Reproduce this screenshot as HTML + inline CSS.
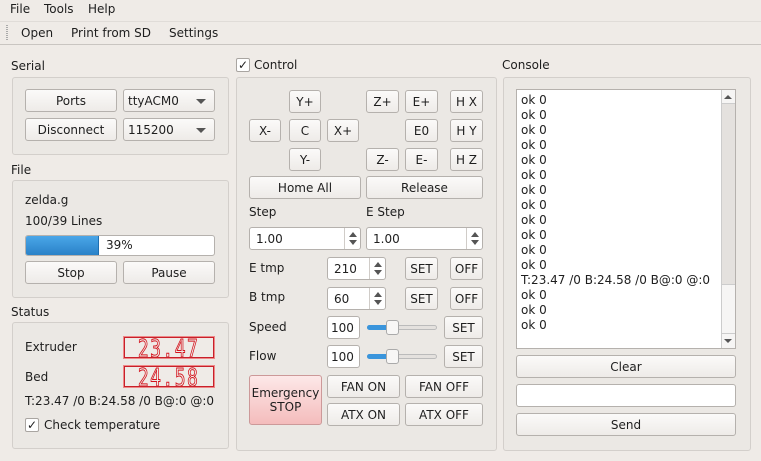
<!DOCTYPE html>
<html><head><meta charset="utf-8"><style>
*{box-sizing:border-box;margin:0;padding:0}
body{width:761px;height:461px;background:#efebe7;font-family:"DejaVu Sans","Liberation Sans",sans-serif;font-size:12px;color:#1e1e1e;position:relative;overflow:hidden}
.a{position:absolute;white-space:nowrap}
.t{position:absolute;white-space:nowrap;line-height:14px}
.b{position:absolute;border:1px solid #b5b1ad;border-radius:3px;background:linear-gradient(#fbfaf9,#eeebe8);text-align:center;display:flex;align-items:center;justify-content:center}
.g{position:absolute;border:1px solid #d3cfcb;border-radius:3px;background:#ebe8e4}
.e{position:absolute;border:1px solid #b5b1ad;border-radius:3px;background:#fff;display:flex;align-items:center;padding-left:8px}
.sp{position:absolute;right:0;top:0;bottom:0;width:16px;border-left:1px solid #d0ccc8}
.sp:before{content:"";position:absolute;left:4px;top:4px;border:4px solid transparent;border-bottom:5px solid #555;border-top:0}
.sp:after{content:"";position:absolute;left:4px;bottom:4px;border:4px solid transparent;border-top:5px solid #555;border-bottom:0}
.dd:after{content:"";position:absolute;right:8px;top:9px;border:5px solid transparent;border-top:5px solid #555;border-bottom:0}
.lcd{position:absolute;border:1px solid #c8202a;outline:1px solid #e88;background:#efebe7;overflow:hidden}
.lcd span{position:absolute;right:14px;top:-2px;font-family:"DejaVu Sans Mono",monospace;font-size:25px;line-height:25px;color:transparent;-webkit-text-stroke:1px #d4141e;transform:scaleX(0.72);transform-origin:right;letter-spacing:2px}
.cb{position:absolute;width:14px;height:14px;border:1px solid #a9a5a1;background:#fff;font-size:12px;line-height:12px;text-align:center;border-radius:2px}
</style></head><body>
<div class="t" style="left:10px;top:2px">File</div>
<div class="t" style="left:44px;top:2px">Tools</div>
<div class="t" style="left:88px;top:2px">Help</div>
<div class="a" style="left:0;top:21px;width:761px;height:24px;border-top:1px solid #e0dcd8;border-bottom:1px solid #c9c5c1"></div>
<div class="a" style="left:6px;top:25px;width:2px;height:15px;border-left:1px dotted #aaa;border-right:1px dotted #aaa"></div>
<div class="t" style="left:21px;top:26px">Open</div>
<div class="t" style="left:71px;top:26px">Print from SD</div>
<div class="t" style="left:169px;top:26px">Settings</div>

<div class="t" style="left:11px;top:59px">Serial</div>
<div class="g" style="left:12px;top:77px;width:217px;height:78px"></div>
<div class="b" style="left:25px;top:89px;width:92px;height:23px">Ports</div>
<div class="e dd" style="left:123px;top:89px;width:92px;height:23px;padding-left:4px;background:linear-gradient(#fbfaf9,#eeebe8)">ttyACM0</div>
<div class="b" style="left:25px;top:118px;width:92px;height:23px">Disconnect</div>
<div class="e dd" style="left:123px;top:118px;width:92px;height:23px;padding-left:4px;background:linear-gradient(#fbfaf9,#eeebe8)">115200</div>

<div class="t" style="left:11px;top:163px">File</div>
<div class="g" style="left:12px;top:180px;width:217px;height:118px"></div>
<div class="t" style="left:25px;top:193px">zelda.g</div>
<div class="t" style="left:25px;top:214px">100/39 Lines</div>
<div class="a" style="left:25px;top:235px;width:190px;height:21px;border:1px solid #b5b1ad;border-radius:3px;background:#fff"></div>
<div class="a" style="left:26px;top:236px;width:73px;height:19px;background:linear-gradient(#4aa6e8,#2a82c8);border-right:1px solid #1f6fb0;border-radius:2px 0 0 2px"></div>
<div class="t" style="left:106px;top:238px">39%</div>
<div class="b" style="left:25px;top:261px;width:92px;height:23px">Stop</div>
<div class="b" style="left:123px;top:261px;width:92px;height:23px">Pause</div>

<div class="t" style="left:11px;top:305px">Status</div>
<div class="g" style="left:12px;top:322px;width:217px;height:127px"></div>
<div class="t" style="left:25px;top:340px">Extruder</div>
<div class="lcd" style="left:124px;top:337px;width:90px;height:21px"><span>23.47</span></div>
<div class="t" style="left:25px;top:370px">Bed</div>
<div class="lcd" style="left:124px;top:366px;width:90px;height:21px"><span>24.58</span></div>
<div class="t" style="left:25px;top:394px">T:23.47 /0 B:24.58 /0 B@:0 @:0</div>
<div class="cb" style="left:25px;top:418px">✓</div>
<div class="t" style="left:44px;top:418px">Check temperature</div>

<div class="cb" style="left:236px;top:58px">✓</div>
<div class="t" style="left:254px;top:58px">Control</div>
<div class="g" style="left:236px;top:77px;width:261px;height:374px"></div>
<div class="b" style="left:289px;top:90px;width:32px;height:23px">Y+</div>
<div class="b" style="left:249px;top:119px;width:32px;height:23px">X-</div>
<div class="b" style="left:289px;top:119px;width:32px;height:23px">C</div>
<div class="b" style="left:327px;top:119px;width:32px;height:23px">X+</div>
<div class="b" style="left:289px;top:148px;width:32px;height:23px">Y-</div>
<div class="b" style="left:366px;top:90px;width:33px;height:23px">Z+</div>
<div class="b" style="left:366px;top:148px;width:33px;height:23px">Z-</div>
<div class="b" style="left:405px;top:90px;width:33px;height:23px">E+</div>
<div class="b" style="left:405px;top:119px;width:33px;height:23px">E0</div>
<div class="b" style="left:405px;top:148px;width:33px;height:23px">E-</div>
<div class="b" style="left:450px;top:90px;width:33px;height:23px">H X</div>
<div class="b" style="left:450px;top:119px;width:33px;height:23px">H Y</div>
<div class="b" style="left:450px;top:148px;width:33px;height:23px">H Z</div>
<div class="b" style="left:249px;top:176px;width:112px;height:23px">Home All</div>
<div class="b" style="left:366px;top:176px;width:117px;height:23px">Release</div>
<div class="t" style="left:249px;top:205px">Step</div>
<div class="t" style="left:366px;top:205px">E Step</div>
<div class="e" style="left:249px;top:227px;width:112px;height:23px;padding-left:6px">1.00<div class="sp"></div></div>
<div class="e" style="left:366px;top:227px;width:117px;height:23px;padding-left:6px">1.00<div class="sp"></div></div>
<div class="t" style="left:249px;top:261px">E tmp</div>
<div class="e" style="left:327px;top:257px;width:59px;height:23px;padding-left:6px">210<div class="sp"></div></div>
<div class="b" style="left:405px;top:257px;width:33px;height:23px">SET</div>
<div class="b" style="left:450px;top:257px;width:33px;height:23px">OFF</div>
<div class="t" style="left:249px;top:290px">B tmp</div>
<div class="e" style="left:327px;top:287px;width:59px;height:23px;padding-left:6px">60<div class="sp"></div></div>
<div class="b" style="left:405px;top:287px;width:33px;height:23px">SET</div>
<div class="b" style="left:450px;top:287px;width:33px;height:23px">OFF</div>
<div class="t" style="left:249px;top:320px">Speed</div>
<div class="e" style="left:327px;top:316px;width:33px;height:23px;padding-left:3px">100</div>
<div class="a" style="left:367px;top:325px;width:70px;height:5px;border:1px solid #bbb;border-radius:3px;background:#e4e1de"></div>
<div class="a" style="left:367px;top:325px;width:22px;height:5px;border-radius:3px;background:#3a95dc"></div>
<div class="a" style="left:386px;top:320px;width:13px;height:15px;border:1px solid #aaa;border-radius:3px;background:#f8f7f6"></div>
<div class="b" style="left:444px;top:316px;width:39px;height:23px">SET</div>
<div class="t" style="left:249px;top:349px">Flow</div>
<div class="e" style="left:327px;top:345px;width:33px;height:23px;padding-left:3px">100</div>
<div class="a" style="left:367px;top:354px;width:70px;height:5px;border:1px solid #bbb;border-radius:3px;background:#e4e1de"></div>
<div class="a" style="left:367px;top:354px;width:22px;height:5px;border-radius:3px;background:#3a95dc"></div>
<div class="a" style="left:386px;top:349px;width:13px;height:15px;border:1px solid #aaa;border-radius:3px;background:#f8f7f6"></div>
<div class="b" style="left:444px;top:345px;width:39px;height:23px">SET</div>
<div class="b" style="left:249px;top:375px;width:73px;height:50px;background:linear-gradient(#fde8e8,#f4bcbc);border-color:#c99;line-height:14px">Emergency<br>STOP</div>
<div class="b" style="left:327px;top:375px;width:73px;height:23px">FAN ON</div>
<div class="b" style="left:405px;top:375px;width:78px;height:23px">FAN OFF</div>
<div class="b" style="left:327px;top:403px;width:73px;height:23px">ATX ON</div>
<div class="b" style="left:405px;top:403px;width:78px;height:23px">ATX OFF</div>

<div class="t" style="left:502px;top:58px">Console</div>
<div class="g" style="left:503px;top:77px;width:248px;height:374px"></div>
<div class="a" style="left:516px;top:89px;width:220px;height:260px;border:1px solid #b5b1ad;background:#fff"></div>
<div class="t" style="left:521px;top:93px;line-height:15px">ok 0<br>ok 0<br>ok 0<br>ok 0<br>ok 0<br>ok 0<br>ok 0<br>ok 0<br>ok 0<br>ok 0<br>ok 0<br>ok 0<br>T:23.47 /0 B:24.58 /0 B@:0 @:0<br>ok 0<br>ok 0<br>ok 0</div>
<div class="a" style="left:721px;top:90px;width:14px;height:258px;border-left:1px solid #ccc;background:#f6f5f4"></div>
<div class="a" style="left:722px;top:103px;width:13px;height:182px;background:#e4e1de;border-top:1px solid #ccc;border-bottom:1px solid #ccc"></div>
<div class="a" style="left:724px;top:95px;border:4px solid transparent;border-bottom:4px solid #555;border-top:0"></div>
<div class="a" style="left:722px;top:333px;width:13px;height:1px;background:#ccc"></div>
<div class="a" style="left:724px;top:339px;border:4px solid transparent;border-top:4px solid #555;border-bottom:0"></div>
<div class="b" style="left:516px;top:355px;width:220px;height:23px">Clear</div>
<div class="e" style="left:516px;top:384px;width:220px;height:23px"></div>
<div class="b" style="left:516px;top:413px;width:220px;height:23px">Send</div>
</body></html>
